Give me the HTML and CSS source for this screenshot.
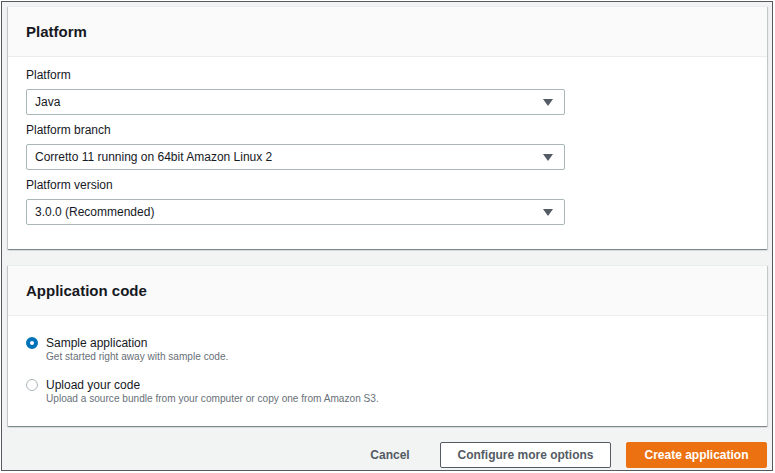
FILE: index.html
```html
<!DOCTYPE html>
<html>
<head>
<meta charset="utf-8">
<link rel="stylesheet" href="styles.css">
</head>
<body>
<div class="frame">
  <section class="card">
    <header class="card-header"><h2>Platform</h2></header>
    <div class="card-body fields">
      <div class="field">
        <div class="label">Platform</div>
        <div class="select"><span>Java</span><span class="caret"></span></div>
      </div>
      <div class="field">
        <div class="label">Platform branch</div>
        <div class="select"><span>Corretto 11 running on 64bit Amazon Linux 2</span><span class="caret"></span></div>
      </div>
      <div class="field">
        <div class="label">Platform version</div>
        <div class="select"><span>3.0.0 (Recommended)</span><span class="caret"></span></div>
      </div>
    </div>
  </section>

  <section class="card">
    <header class="card-header"><h2>Application code</h2></header>
    <div class="card-body radios">
      <div class="radio-row">
        <span class="radio checked"></span>
        <div class="radio-text">
          <div class="radio-title">Sample application</div>
          <div class="radio-desc">Get started right away with sample code.</div>
        </div>
      </div>
      <div class="radio-row">
        <span class="radio"></span>
        <div class="radio-text">
          <div class="radio-title">Upload your code</div>
          <div class="radio-desc">Upload a source bundle from your computer or copy one from Amazon S3.</div>
        </div>
      </div>
    </div>
  </section>

  <footer class="actions">
    <button class="btn btn-link">Cancel</button>
    <button class="btn btn-normal">Configure more options</button>
    <button class="btn btn-primary">Create application</button>
  </footer>
</div>
</body>
</html>
```

FILE: styles.css
```css
* { box-sizing: border-box; }
html, body { margin: 0; padding: 0; background: #ffffff; }
body {
  font-family: "Liberation Sans", Arial, sans-serif;
  color: #16191f;
}
.frame {
  margin: 1px 2px 2px 1px;
  height: 470px;
  border: 1px solid #555a5f;
  background: #f2f3f3;
  padding: 4px 5px 0 6px;
  display: flex;
  flex-direction: column;
  gap: 16px;
}
.card {
  background: #ffffff;
  border-top: 1px solid #eaeded;
  box-shadow: 0 1px 1px 0 rgba(0,28,36,.3), 1px 1px 1px 0 rgba(0,28,36,.15), -1px 1px 1px 0 rgba(0,28,36,.15);
}
.card-header {
  height: 50px;
  background: #fafafa;
  border-bottom: 1px solid #eaeded;
  display: flex;
  align-items: center;
  padding: 0 18px;
}
.card-header h2 {
  margin: 0;
  font-size: 15px;
  font-weight: bold;
  color: #16191f;
}
.card-body { padding: 0 18px; }
.fields {
  padding-top: 10px;
  padding-bottom: 24px;
  display: flex;
  flex-direction: column;
  gap: 7px;
}
.label {
  font-size: 12px;
  line-height: 17px;
  color: #16191f;
  margin-bottom: 5px;
}
.select {
  width: 539px;
  height: 26px;
  border: 1px solid #aab7b8;
  border-radius: 2px;
  background: #fff;
  display: flex;
  align-items: center;
  justify-content: space-between;
  padding: 0 11px 0 8px;
  font-size: 12px;
  color: #16191f;
}
.caret {
  width: 0; height: 0;
  border-left: 5px solid transparent;
  border-right: 5px solid transparent;
  border-top: 7px solid #545b64;
}
.radios {
  padding-top: 20px;
  padding-bottom: 20px;
  display: flex;
  flex-direction: column;
  gap: 14px;
}
.radio-row { display: flex; align-items: flex-start; }
.radio {
  width: 12px; height: 12px;
  margin-top: 1px;
  border-radius: 50%;
  border: 1px solid #aab7b8;
  background: #fff;
  flex: none;
}
.radio.checked { border: 4px solid #0073bb; }
.radio-text { margin-left: 8px; }
.radio-title { font-size: 12px; line-height: 14px; color: #16191f; }
.radio-desc { font-size: 10.1px; line-height: 14px; color: #687078; }
.actions {
  display: flex;
  justify-content: flex-end;
  align-items: center;
}
.btn {
  font-family: "Liberation Sans", Arial, sans-serif;
  font-size: 12px;
  font-weight: bold;
  height: 26px;
  border-radius: 2px;
  padding: 0 8px;
  white-space: nowrap;
  cursor: pointer;
}
.btn-link {
  background: transparent;
  border: 1px solid transparent;
  color: #545b64;
  width: 80px;
  margin-right: 10px;
}
.btn-normal {
  background: #fff;
  border: 1px solid #545b64;
  color: #545b64;
  width: 171px;
  margin-right: 15px;
}
.btn-primary {
  background: #ec7211;
  border: 1px solid #ec7211;
  color: #fff;
  width: 141px;
}
```
